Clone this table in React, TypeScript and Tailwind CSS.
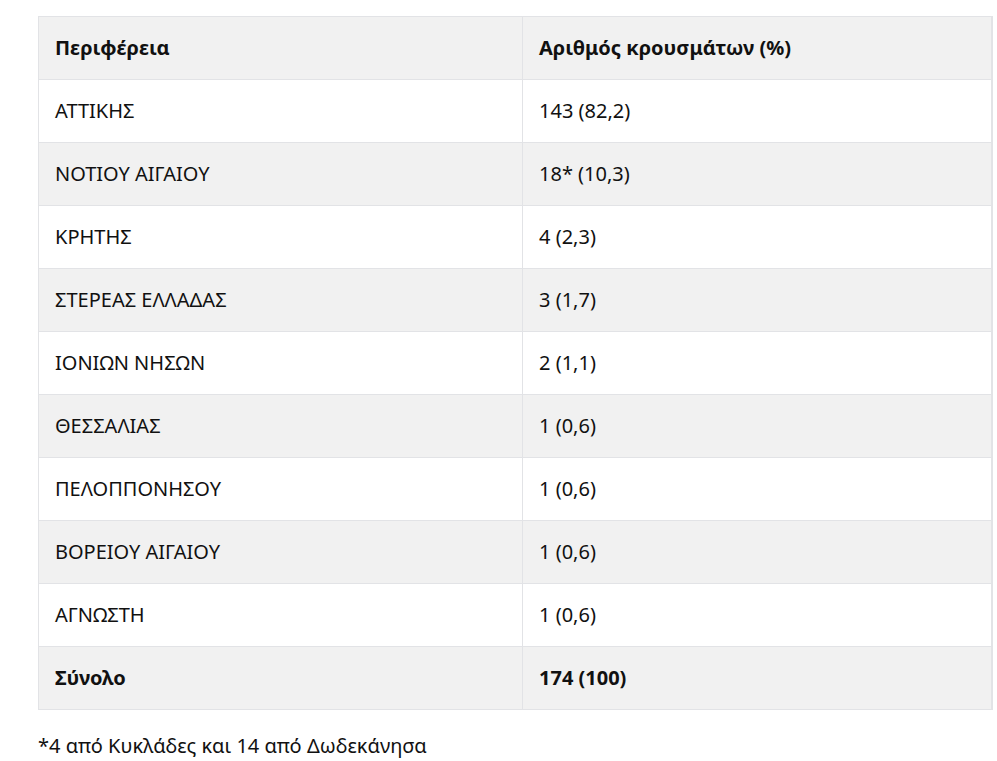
import React from 'react';

const rows = [
  { region: 'ΑΤΤΙΚΗΣ', cases: '143 (82,2)' },
  { region: 'ΝΟΤΙΟΥ ΑΙΓΑΙΟΥ', cases: '18* (10,3)' },
  { region: 'ΚΡΗΤΗΣ', cases: '4 (2,3)' },
  { region: 'ΣΤΕΡΕΑΣ ΕΛΛΑΔΑΣ', cases: '3 (1,7)' },
  { region: 'ΙΟΝΙΩΝ ΝΗΣΩΝ', cases: '2 (1,1)' },
  { region: 'ΘΕΣΣΑΛΙΑΣ', cases: '1 (0,6)' },
  { region: 'ΠΕΛΟΠΠΟΝΗΣΟΥ', cases: '1 (0,6)' },
  { region: 'ΒΟΡΕΙΟΥ ΑΙΓΑΙΟΥ', cases: '1 (0,6)' },
  { region: 'ΑΓΝΩΣΤΗ', cases: '1 (0,6)' },
];

export default function App() {
  return (
    <div className="min-h-screen bg-white pl-[38px] pr-[4px] pt-4 text-[20px] text-[#111] font-['Noto_Sans',sans-serif]">
      <table className="w-[955px] border-collapse border-r-2 border-[#e2e3e6]">
        <thead>
          <tr className="bg-[#f1f1f1] h-[63px]">
            <th className="w-[484px] border border-[#e2e3e6] pl-4 text-left font-bold">Περιφέρεια</th>
            <th className="border border-[#e2e3e6] pl-4 text-left font-bold">Αριθμός κρουσμάτων (%)</th>
          </tr>
        </thead>
        <tbody>
          {rows.map((r, i) => (
            <tr key={i} className={`h-[63px] ${i % 2 === 1 ? 'bg-[#f1f1f1]' : 'bg-white'}`}>
              <td className="border border-[#e2e3e6] pl-4">{r.region}</td>
              <td className="border border-[#e2e3e6] pl-4">{r.cases}</td>
            </tr>
          ))}
          <tr className="h-[63px] bg-[#f1f1f1]">
            <td className="border border-[#e2e3e6] pl-4 font-bold">Σύνολο</td>
            <td className="border border-[#e2e3e6] pl-4 font-bold">174 (100)</td>
          </tr>
        </tbody>
      </table>
      <p className="mt-[21px]">*4 από Κυκλάδες και 14 από Δωδεκάνησα</p>
    </div>
  );
}
